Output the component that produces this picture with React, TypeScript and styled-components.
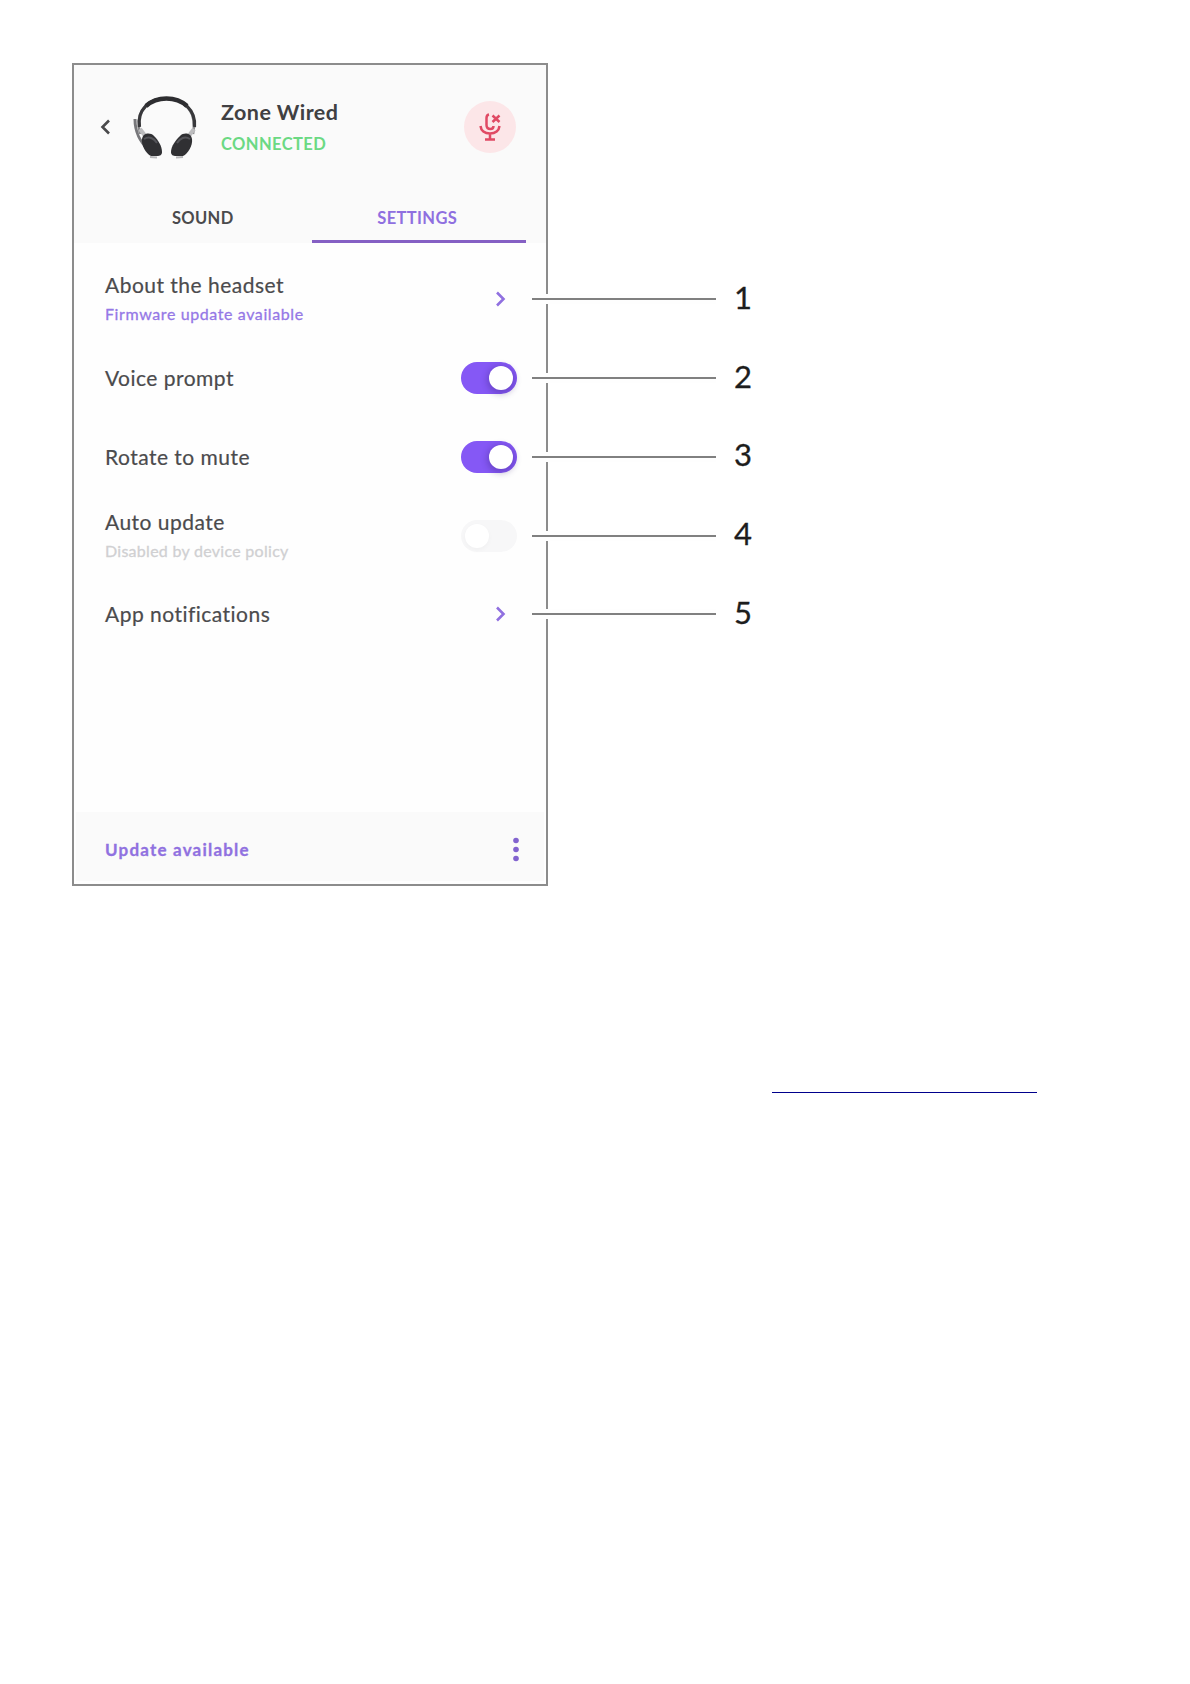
import styled, { createGlobalStyle } from 'styled-components';

const GlobalStyle = createGlobalStyle`
  * {
    box-sizing: border-box;
  }

  body {
    margin: 0;
    background: #ffffff;
    font-family: Lato, 'Liberation Sans', sans-serif;
  }
`;

const Page = styled.main`
  min-height: 1684px;
  padding: 63px 0 0 72px;
  overflow: hidden;
`;

const Card = styled.section`
  display: flex;
  flex-direction: column;
  width: 476px;
  height: 823px;
  border: 2px solid #8c8c8c;
  background: #fefefe;
`;

const Header = styled.header`
  height: 178px;
  padding: 0 20px 0 23px;
  background: #fafafa;
`;

const DeviceBar = styled.div`
  display: flex;
  align-items: center;
  height: 124px;
  padding-right: 10px;
`;

const BackButton = styled.button`
  display: flex;
  padding: 0;
  margin-left: 3px;
  border: 0;
  background: none;
`;

const DevicePicture = styled.svg`
  margin-left: 21px;
`;

const DeviceText = styled.div`
  flex: 1;
  margin-left: 22px;
  padding-top: 2px;
`;

const DeviceName = styled.h1`
  margin: 0;
  color: #404042;
  font-size: 21.5px;
  font-weight: 700;
  line-height: 31px;
  letter-spacing: 0.45px;
`;

const Status = styled.div`
  color: #6bd983;
  font-size: 16.5px;
  font-weight: 700;
  line-height: 32px;
  letter-spacing: 0.4px;
`;

const MuteButton = styled.button`
  display: flex;
  align-items: center;
  justify-content: center;
  width: 52px;
  height: 52px;
  padding: 0;
  border: 0;
  border-radius: 50%;
  background: #fce6e8;
`;

const Tabs = styled.nav`
  display: flex;
  height: 54px;
`;

const Tab = styled.div<{ $active?: boolean }>`
  flex: 1;
  padding-right: 3px;
  border-bottom: 3px solid ${({ $active }) => ($active ? '#8560c4' : 'transparent')};
  color: ${({ $active }) => ($active ? '#8f6fe0' : '#4a4a4c')};
  font-size: 16.5px;
  font-weight: 700;
  line-height: 58px;
  letter-spacing: 0.35px;
  text-align: center;
`;

const SettingsList = styled.ul`
  display: grid;
  grid-auto-rows: 78.75px;
  flex: 1;
  align-content: start;
  margin: 0;
  padding: 17px 0 0 31px;
  list-style: none;
`;

const Row = styled.li`
  display: flex;
  align-items: center;
  width: 700px;
`;

const RowText = styled.div`
  width: 356px;
`;

const Label = styled.div`
  color: #4b4b4d;
  font-size: 21px;
  line-height: 30px;
  letter-spacing: 0.48px;
  -webkit-text-stroke: 0.2px currentColor;
`;

const Hint = styled.div<{ $muted?: boolean }>`
  color: ${({ $muted }) => ($muted ? '#d0d0d2' : '#9578e6')};
  font-size: 16px;
  line-height: 28px;
  letter-spacing: ${({ $muted }) => ($muted ? '0.28px' : '0.6px')};
  -webkit-text-stroke: 0.3px currentColor;
`;

const Control = styled.div`
  display: flex;
  width: 56px;
  height: 32px;
  align-items: center;
`;

const Switch = styled.div<{ $on?: boolean }>`
  display: flex;
  align-items: center;
  justify-content: ${({ $on }) => ($on ? 'flex-end' : 'flex-start')};
  width: 56px;
  height: 32px;
  padding: 0 4px;
  border-radius: 16px;
  background: ${({ $on }) => ($on ? '#8558f5' : '#f7f7f8')};
`;

const Knob = styled.span<{ $on?: boolean }>`
  width: 24px;
  height: 24px;
  border-radius: 50%;
  background: #ffffff;
  box-shadow: ${({ $on }) =>
    $on ? '0 2px 6px 2px rgba(50, 30, 110, 0.3)' : '0 2px 5px rgba(0, 0, 0, 0.03)'};
`;

const ForwardIcon = styled.svg`
  margin-left: 33px;
`;

/* The pale strip above and below the rule interrupts the card border. */
const Leader = styled.div`
  width: 184px;
  height: 10px;
  margin-left: 15px;
  background: linear-gradient(
    #fefefe 4px,
    #808080 4px,
    #808080 6px,
    #fefefe 6px
  );
`;

const CalloutNumber = styled.span`
  margin-left: 18px;
  padding-bottom: 5px;
  color: #1d1d1d;
  font-size: 31px;
  line-height: 40px;
  -webkit-text-stroke: 0.3px currentColor;
`;

const Footer = styled.footer`
  display: flex;
  align-items: center;
  justify-content: space-between;
  height: 69px;
  margin: 0 2px 3px;
  padding: 6px 24px 0 29px;
  background: #fafafa;
`;

const UpdateLink = styled.span`
  color: #9071e0;
  font-size: 17px;
  font-weight: 700;
  letter-spacing: 1.2px;
  -webkit-text-stroke: 0.3px currentColor;
`;

const ReferenceLink = styled.div`
  width: 265px;
  height: 1px;
  margin: 206px 0 0 700px;
  background: #00008c;
`;

type Setting = {
  label: string;
  hint?: string;
  control: 'link' | 'on' | 'off';
};

const settings: Setting[] = [
  { label: 'About the headset', hint: 'Firmware update available', control: 'link' },
  { label: 'Voice prompt', control: 'on' },
  { label: 'Rotate to mute', control: 'on' },
  { label: 'Auto update', hint: 'Disabled by device policy', control: 'off' },
  { label: 'App notifications', control: 'link' },
];

function Headset() {
  return (
    <DevicePicture width="66" height="66" viewBox="0 0 66 66" fill="none">
      <path d="M2 25c0 13 4 22 14 31" stroke="#77777a" strokeWidth="3" />
      <path d="M7 40C2 20 12 4.500 33 4.500S64 20 60 40" stroke="#8a8a8c" strokeWidth="2.6" />
      <path d="M6.500 33C4 16 16 4.500 33 4.500S63 16 61.500 33" stroke="#38383b" strokeWidth="3.2" />
      <path d="M13 12C24 2 43 2 54 12" stroke="#2d2d30" strokeWidth="4.4" />
      <path d="M7 35l6 8M61 35l-6 8" stroke="#bcbcbe" strokeWidth="4" />
      <path d="M9 45c1-6 8-7 12-3 4 4 8 10 8 16 0 3-2 4-5 4h-6c-5-2-10-11-9-17z" fill="#303033" />
      <path d="M59 45c-1-6-8-7-12-3-4 4-9 10-9 16 0 3 2 4 5 4h7c5-2 10-11 9-17z" fill="#303033" />
      <path d="M11 45c5-3 10-1 13 4M57 45c-5-3-10-1-13 4" stroke="#55555a" strokeWidth="2" />
      <path d="M17 63l7 .5M43 63.500l7-.5" stroke="#b7b7b9" strokeWidth="2" />
    </DevicePicture>
  );
}

function MutedMic() {
  return (
    <svg width="24" height="30" viewBox="0 0 24 30" fill="none" stroke="#e04a64" strokeWidth="2.5">
      <path d="M11 2.500C8.700 3 8.500 4.500 8.500 6v7c0 2.500 1.500 4 4 4 1.800 0 3-1 3-3" />
      <path d="M2.500 14c.5 4.500 4 7.500 9.500 7.500s9-3 9.500-7.500M12 21v6.500M7 27.500h10" />
      <path d="M14.500 3.500l7 6.500M21.500 3.500l-7 6.500" />
    </svg>
  );
}

function SettingControl({ type }: { type: Setting['control'] }) {
  if (type === 'link') {
    return (
      <ForwardIcon width="14" height="18" viewBox="0 0 14 18" fill="none">
        <path d="M3 2.500L9.500 9 3 15.500" stroke="#9070e0" strokeWidth="2.600" />
      </ForwardIcon>
    );
  }

  return (
    <Switch $on={type === 'on'}>
      <Knob $on={type === 'on'} />
    </Switch>
  );
}

export default function App() {
  return (
    <Page>
      <GlobalStyle />
      <Card>
        <Header>
          <DeviceBar>
            <BackButton aria-label="Back">
              <svg width="12" height="18" viewBox="0 0 12 18" fill="none">
                <path d="M9 2.500L2.500 9 9 15.500" stroke="#49494b" strokeWidth="2.600" />
              </svg>
            </BackButton>
            <Headset />
            <DeviceText>
              <DeviceName>Zone Wired</DeviceName>
              <Status>CONNECTED</Status>
            </DeviceText>
            <MuteButton aria-label="Unmute">
              <MutedMic />
            </MuteButton>
          </DeviceBar>
          <Tabs>
            <Tab>SOUND</Tab>
            <Tab $active>SETTINGS</Tab>
          </Tabs>
        </Header>

        <SettingsList>
          {settings.map(({ label, hint, control }, index) => (
            <Row key={label}>
              <RowText>
                <Label>{label}</Label>
                {hint && <Hint $muted={control === 'off'}>{hint}</Hint>}
              </RowText>
              <Control>
                <SettingControl type={control} />
              </Control>
              <Leader />
              <CalloutNumber>{index + 1}</CalloutNumber>
            </Row>
          ))}
        </SettingsList>

        <Footer>
          <UpdateLink>Update available</UpdateLink>
          <svg width="8" height="26" viewBox="0 0 8 26" fill="#8263cf">
            <circle cx="4" cy="3.500" r="2.800" />
            <circle cx="4" cy="12.500" r="2.800" />
            <circle cx="4" cy="21.500" r="2.800" />
          </svg>
        </Footer>
      </Card>
      <ReferenceLink />
    </Page>
  );
}
